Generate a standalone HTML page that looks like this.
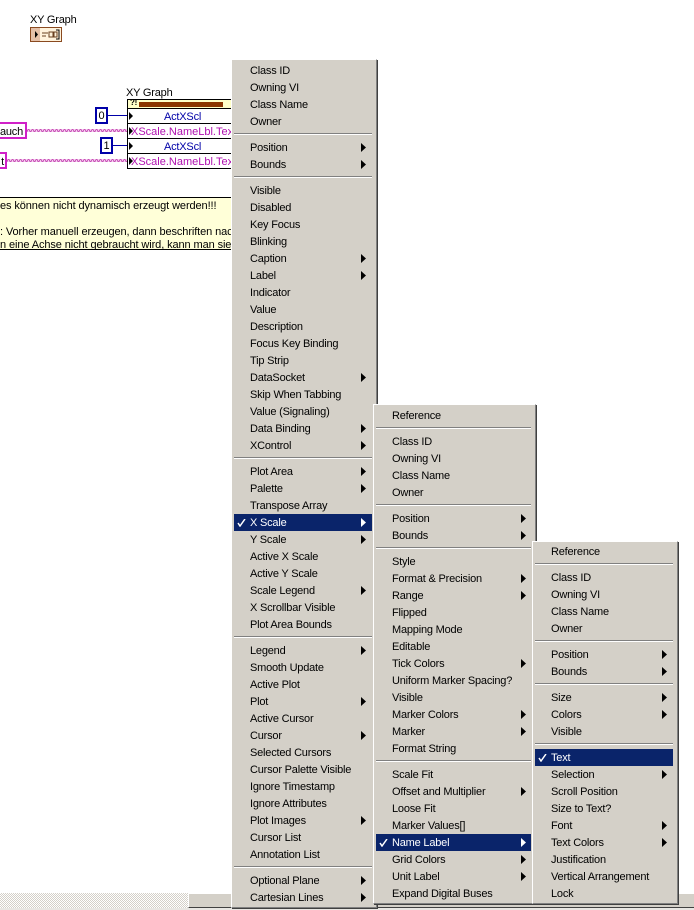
<!DOCTYPE html>
<html><head><meta charset="utf-8">
<style>
html,body{margin:0;padding:0;background:#fff}
#p{position:relative;width:694px;height:910px;overflow:hidden;background:#fff;font:11px/13px "Liberation Sans",sans-serif;letter-spacing:-.2px;color:#000}
.a{position:absolute;white-space:nowrap}
.m{position:absolute;box-sizing:border-box;background:#d4d0c8;border-top:1px solid #fff;border-left:1px solid #fff;box-shadow:1px 1px 0 #404040;border-right:1px solid #808080;border-bottom:1px solid #808080}
.r{position:relative;height:17px;line-height:19px;padding-left:var(--t);white-space:nowrap}
.s{height:9px;position:relative}
.s:before{content:"";position:absolute;left:0;right:0;top:3px;height:1px;background:#808080;border-bottom:1px solid #fff}
.h{background:#0a246a;color:#fff}
.v:after{content:"";position:absolute;right:var(--ar);top:4px;width:5px;height:9px;background:#000;clip-path:polygon(0 0,100% 50%,0 100%)}
.h.v:after{background:#fff}
.c{position:absolute;left:var(--cx);top:5px}
.box{position:absolute;box-sizing:border-box;background:#fff;text-align:center}
.nr{position:absolute;left:127px;width:120px;height:16px;box-sizing:border-box;border:1px solid #000;background:#fff;line-height:17px;white-space:nowrap}
.mg{color:#b010b0;padding-left:3px;letter-spacing:0}
.bl{color:#0000a8;padding-left:36px}
.t{position:absolute;left:1px;top:3px;width:4px;height:8px;background:#000;clip-path:polygon(0 0,100% 50%,0 100%)}
.nt{letter-spacing:-.1px}
</style></head>
<body><div id="p">

<div class="a" style="left:30px;top:14px">XY Graph</div>
<div class="a" style="left:30px;top:27px;width:32px;height:15px;box-sizing:border-box;border:1px solid #8a4a20;background:#fff3dc">
  <svg width="30" height="13" style="position:absolute;left:0;top:0"><rect x="0" y="0" width="9" height="13" fill="#e4c0a8"/><path d="M4 3v7l3-3.500z" fill="#000"/><path d="M11 5h6M11 8h4M18 4h4v5h-4zM23 4h3v5h-3z" stroke="#6a4020" fill="none"/><path d="M25 2h3v9h-3" stroke="#000" fill="none"/></svg>
</div>

<div class="a" style="left:126px;top:87px">XY Graph</div>
<div style="position:absolute;left:127px;top:99px;width:120px;height:10px;box-sizing:border-box;border:1px solid #000;background:#ffffc8">
  <div class="a" style="left:2px;top:-2px;font:bold 8px/10px 'Liberation Sans',sans-serif">?!</div>
  <div class="a" style="left:11px;top:2px;width:84px;height:5px;background:#8b3500"></div>
</div>
<div class="nr bl" style="top:108px"><i class="t"></i>ActXScl</div>
<div class="nr mg" style="top:123px"><i class="t"></i>XScale.NameLbl.Text</div>
<div class="nr bl" style="top:138px"><i class="t"></i>ActXScl</div>
<div class="nr mg" style="top:153px"><i class="t"></i>XScale.NameLbl.Text</div>

<div class="box" style="left:95px;top:107px;width:13px;height:17px;border:2px solid #0000a8;line-height:15px">0</div>
<div class="box" style="left:100px;top:137px;width:13px;height:17px;border:2px solid #0000a8;line-height:15px">1</div>
<div class="a" style="left:108px;top:115px;width:19px;height:1px;background:#0000a8"></div>
<div class="a" style="left:113px;top:145px;width:14px;height:1px;background:#0000a8"></div>

<div class="box" style="left:-10px;top:122px;width:37px;height:17px;border:2px solid #d020c8;line-height:16px;text-align:right;padding-right:2px;overflow:hidden">auch</div>
<div class="box" style="left:-10px;top:152px;width:17px;height:17px;border:2px solid #d020c8;line-height:16px;text-align:right;padding-right:1px;overflow:hidden">t</div>
<svg class="a" style="left:0;top:120px" width="130" height="50">
<defs><pattern id="w" width="4" height="3" patternUnits="userSpaceOnUse"><path d="M0 .5h1l1 2h1l1-2" fill="none" stroke="#c850b8"/></pattern></defs>
<rect x="27" y="9" width="100" height="3" fill="#f6d4f0"/>
<rect x="27" y="9" width="100" height="3" fill="url(#w)"/>
<rect x="7" y="39" width="120" height="3" fill="#f6d4f0"/>
<rect x="7" y="39" width="120" height="3" fill="url(#w)"/>
</svg>

<div class="a nt" style="left:-1px;top:197px;width:240px;height:53px;box-sizing:border-box;border:1px solid #000;border-width:1px 0;background:#ffffd8;overflow:hidden">
  <div class="a" style="left:1px;top:2px">es können nicht dynamisch erzeugt werden!!!</div>
  <div class="a" style="left:1px;top:28px">: Vorher manuell erzeugen, dann beschriften nach</div>
  <div class="a" style="left:1px;top:41px">n eine Achse nicht gebraucht wird, kann man sie</div>
</div>

<div class="a" style="left:0;top:893px;width:188px;height:15px;background-color:#e8e6e2;background-image:repeating-conic-gradient(#d4d0c8 0 25%,#fff 0 50%);background-size:2px 2px"></div>
<div class="a" style="left:188px;top:893px;width:506px;height:15px;box-sizing:border-box;background:#d4d0c8;border-top:1px solid #fff;border-left:1px solid #fff;border-bottom:1px solid #404040"></div>
<div class="a" style="left:0;top:908px;width:694px;height:2px;background:#e8e6e2"></div>

<div class="m" style="left:231px;top:59px;width:146px;height:849px;padding:2px 4px 0 2px;--t:16px;--ar:6px;--cx:3px">
<div class="r">Class ID</div><div class="r">Owning VI</div><div class="r">Class Name</div><div class="r">Owner</div><div class="s"></div>
<div class="r v">Position</div><div class="r v">Bounds</div><div class="s"></div>
<div class="r">Visible</div><div class="r">Disabled</div><div class="r">Key Focus</div><div class="r">Blinking</div><div class="r v">Caption</div><div class="r v">Label</div><div class="r">Indicator</div><div class="r">Value</div><div class="r">Description</div><div class="r">Focus Key Binding</div><div class="r">Tip Strip</div><div class="r v">DataSocket</div><div class="r">Skip When Tabbing</div><div class="r">Value (Signaling)</div><div class="r v">Data Binding</div><div class="r v">XControl</div><div class="s"></div>
<div class="r v">Plot Area</div><div class="r v">Palette</div><div class="r">Transpose Array</div>
<div class="r v h"><svg class="c" width="9" height="8"><path d="M1 4l2 3 5-7" fill="none" stroke="#fff" stroke-width="1.500"/></svg>X Scale</div>
<div class="r v">Y Scale</div><div class="r">Active X Scale</div><div class="r">Active Y Scale</div><div class="r v">Scale Legend</div><div class="r">X Scrollbar Visible</div><div class="r">Plot Area Bounds</div><div class="s"></div>
<div class="r v">Legend</div><div class="r">Smooth Update</div><div class="r">Active Plot</div><div class="r v">Plot</div><div class="r">Active Cursor</div><div class="r v">Cursor</div><div class="r">Selected Cursors</div><div class="r">Cursor Palette Visible</div><div class="r">Ignore Timestamp</div><div class="r">Ignore Attributes</div><div class="r v">Plot Images</div><div class="r">Cursor List</div><div class="r">Annotation List</div><div class="s"></div>
<div class="r v">Optional Plane</div><div class="r v">Cartesian Lines</div>
</div>

<div class="m" style="left:373px;top:404px;width:163px;height:500px;padding:2px 4px 0 2px;--t:16px;--ar:5px;--cx:3px">
<div class="r">Reference</div><div class="s"></div>
<div class="r">Class ID</div><div class="r">Owning VI</div><div class="r">Class Name</div><div class="r">Owner</div><div class="s"></div>
<div class="r v">Position</div><div class="r v">Bounds</div><div class="s"></div>
<div class="r">Style</div><div class="r v">Format &amp; Precision</div><div class="r v">Range</div><div class="r">Flipped</div><div class="r">Mapping Mode</div><div class="r">Editable</div><div class="r v">Tick Colors</div><div class="r">Uniform Marker Spacing?</div><div class="r">Visible</div><div class="r v">Marker Colors</div><div class="r v">Marker</div><div class="r">Format String</div><div class="s"></div>
<div class="r">Scale Fit</div><div class="r v">Offset and Multiplier</div><div class="r">Loose Fit</div><div class="r">Marker Values[]</div>
<div class="r v h"><svg class="c" width="9" height="8"><path d="M1 4l2 3 5-7" fill="none" stroke="#fff" stroke-width="1.500"/></svg>Name Label</div>
<div class="r v">Grid Colors</div><div class="r v">Unit Label</div><div class="r">Expand Digital Buses</div>
</div>

<div class="m" style="left:532px;top:541px;width:146px;height:363px;padding:1px 4px 0 2px;--t:16px;--ar:6px;--cx:3px">
<div class="r">Reference</div><div class="s"></div>
<div class="r">Class ID</div><div class="r">Owning VI</div><div class="r">Class Name</div><div class="r">Owner</div><div class="s"></div>
<div class="r v">Position</div><div class="r v">Bounds</div><div class="s"></div>
<div class="r v">Size</div><div class="r v">Colors</div><div class="r">Visible</div><div class="s"></div>
<div class="r h"><svg class="c" width="9" height="8"><path d="M1 4l2 3 5-7" fill="none" stroke="#fff" stroke-width="1.500"/></svg>Text</div>
<div class="r v">Selection</div><div class="r">Scroll Position</div><div class="r">Size to Text?</div><div class="r v">Font</div><div class="r v">Text Colors</div><div class="r">Justification</div><div class="r">Vertical Arrangement</div><div class="r">Lock</div>
</div>

</div></body></html>
